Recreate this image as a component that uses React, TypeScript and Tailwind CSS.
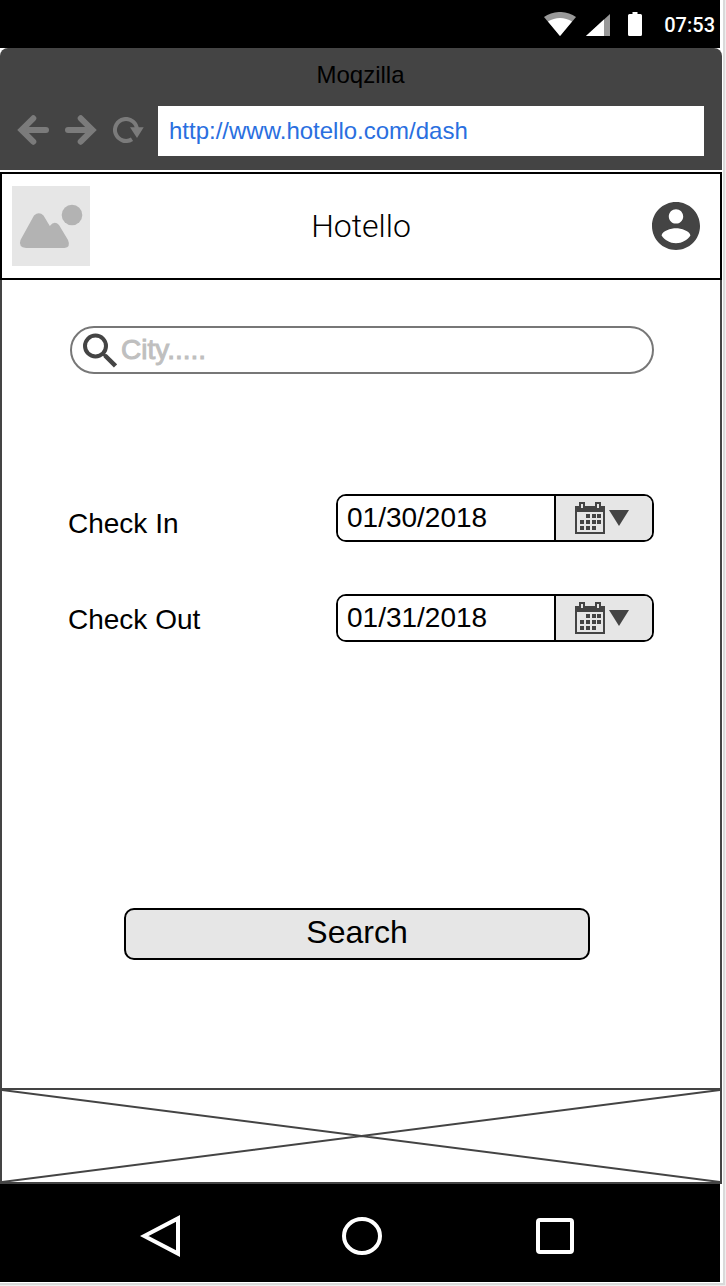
import { useState } from "react";

function StatusBar() {
  return (
    <div className="mr-0.5 flex h-12 items-center justify-end bg-black pr-[5px] text-white">
      <svg className="mr-2.5 h-6 w-8" viewBox="0 0 32 24" aria-hidden="true">
        <path d="M0 5C9-1.700 23-1.700 32 5L16 24Z" fill="#999" />
        <path d="M4 9.500C11 4.700 21 4.700 28 9.500L16 24Z" fill="#fff" />
      </svg>
      <svg className="mr-[18px] h-6 w-6" viewBox="0 0 24 24" aria-hidden="true">
        <path d="M0 24L24 2V24Z" fill="#999" />
        <path d="M0 24L18 7.500V24Z" fill="#fff" />
      </svg>
      <svg className="mr-[22px] h-6 w-3.5" viewBox="0 0 14 24" aria-hidden="true">
        <path d="M4.500 0H9.500V2H12.500Q14 2 14 3.500V22.500Q14 24 12.500 24H1.500Q0 24 0 22.500V3.500Q0 2 1.500 2H4.500Z" fill="#fff" />
      </svg>
      <time className="pt-0.5 font-['Roboto',sans-serif] text-xl font-medium">07:53</time>
    </div>
  );
}

function ArrowIcon({ className }: { className?: string }) {
  return (
    <svg className={className} viewBox="0 0 32 30" fill="none" stroke="#7b7b7b" strokeWidth="6" strokeLinecap="round" aria-hidden="true">
      <path d="M29 15H6" />
      <path d="M16.300 3.300L4.500 15L16.300 26.700" />
    </svg>
  );
}

function BrowserBar() {
  const [url, setUrl] = useState("http://www.hotello.com/dash");
  return (
    <div className="rounded-t-lg bg-[#444] pr-[18px] pb-3.5 pl-[17px]">
      <div className="pt-[9px] pb-[13px] text-center text-2xl leading-9">Moqzilla</div>
      <div className="flex items-center">
        <div className="flex items-center gap-4 pr-3.5 pb-0.5">
          <button type="button" aria-label="Back">
            <ArrowIcon className="block h-[30px] w-8" />
          </button>
          <button type="button" aria-label="Forward">
            <ArrowIcon className="block h-[30px] w-8 rotate-180" />
          </button>
          <button type="button" aria-label="Reload">
            <svg className="block h-[26px] w-[31px]" viewBox="0 0 31 26" aria-hidden="true">
              <path d="M19 22.200A11 11 0 1 1 24 13" fill="none" stroke="#7b7b7b" strokeWidth="4" />
              <path d="M17 10.300H30.700L24 21Z" fill="#7b7b7b" />
            </svg>
          </button>
        </div>
        <input
          type="text"
          aria-label="Address"
          value={url}
          onChange={(e) => setUrl(e.target.value)}
          className="h-[50px] min-w-0 flex-1 bg-white px-[11px] text-2xl text-[#2a6fdf] outline-none"
        />
      </div>
    </div>
  );
}

function AppHeader() {
  return (
    <header className="mt-0.5 flex items-center justify-between border-2 border-black bg-white py-3 pr-5 pl-2.5">
      <svg className="h-20 w-[78px] bg-[#e6e6e6]" viewBox="0 0 78 80" fill="#b3b3b3" role="img" aria-label="Logo">
        <path d="M22 29.500Q27 25 31.500 29.500L37.800 40Q42.500 34 47 39L56 54Q59 61 52.500 62H14Q6 61 8.500 54Z" />
        <circle cx="60" cy="29" r="10.300" />
      </svg>
      <h1 className="pr-5 font-['Roboto',sans-serif] text-[32px] leading-10 font-light">
        Hotello
      </h1>
      <button type="button" aria-label="Account">
        <svg className="block h-12 w-12" viewBox="2 2 20 20" fill="#444" aria-hidden="true">
          <path d="M12 2C6.480 2 2 6.480 2 12s4.480 10 10 10 10-4.480 10-10S17.520 2 12 2zm0 3c1.660 0 3 1.340 3 3s-1.340 3-3 3-3-1.340-3-3 1.340-3 3-3zm0 14.200c-2.500 0-4.710-1.280-6-3.220.03-1.990 4-3.080 6-3.080 1.990 0 5.970 1.090 6 3.080-1.290 1.940-3.500 3.220-6 3.220z" />
        </svg>
      </button>
    </header>
  );
}

function CalendarIcon() {
  return (
    <svg className="h-8 w-[30px]" viewBox="0 0 30 32" fill="#444" shapeRendering="crispEdges" aria-hidden="true">
      <path fillRule="evenodd" d="M0 4H4V0H10V4H20V0H26V4H30V32H0ZM6 2V6H8V2ZM22 2V6H24V2ZM2 10V30H28V10Z" />
      <path d="M11 12h4v4h-4zM17 12h4v4h-4zM22 12h4v4h-4zM5 18h4v4h-4zM11 18h4v4h-4zM17 18h4v4h-4zM22 18h4v4h-4zM5 24h4v4h-4zM11 24h4v4h-4zM17 24h4v4h-4z" />
    </svg>
  );
}

function DateField({ id, label, initial }: { id: string; label: string; initial: string }) {
  const [value, setValue] = useState(initial);
  return (
    <div className="flex h-12 overflow-hidden rounded-[10px] border-2 border-black bg-white">
      <input
        id={id}
        type="text"
        value={value}
        onChange={(e) => setValue(e.target.value)}
        className="min-w-0 flex-1 bg-white pl-[9px] text-[28px] outline-none"
      />
      <button
        type="button"
        aria-label={`Choose ${label} date`}
        className="flex w-[98px] items-center gap-1 border-l-2 border-black bg-[#e6e6e6] pl-[19px]"
      >
        <CalendarIcon />
        <svg className="h-4 w-5" viewBox="0 0 20 16" aria-hidden="true">
          <path d="M0 0H20L10 16Z" fill="#444" />
        </svg>
      </button>
    </div>
  );
}

function SearchForm() {
  const [city, setCity] = useState("");
  return (
    <form
      className="flex flex-1 flex-col border-x-2 border-[#444] bg-white px-[66px] pt-[46px] pb-32"
      onSubmit={(e) => e.preventDefault()}
    >
      <div className="ml-0.5 flex h-12 items-center rounded-full border-2 border-[#777] pl-2.5">
        <svg className="h-[35px] w-[35px]" viewBox="0 0 35 35" fill="none" stroke="#444" aria-hidden="true">
          <circle cx="13.500" cy="13" r="10.500" strokeWidth="4" />
          <path d="M20.500 20.500L23.500 23" strokeWidth="3" />
          <path d="M23 22.500L33.500 33" strokeWidth="4.500" />
        </svg>
        <input
          type="text"
          aria-label="City"
          placeholder="City....."
          value={city}
          onChange={(e) => setCity(e.target.value)}
          className="mr-6 ml-1 min-w-0 flex-1 bg-transparent text-[28px] outline-none placeholder:text-[#bfbfbf] placeholder:[-webkit-text-stroke:1px_#bfbfbf]"
        />
      </div>
      <div className="mt-[120px] mb-10 flex justify-between gap-6">
        <div className="flex flex-col gap-16 pt-3.5 text-[28px] leading-8">
          <label htmlFor="check-in">Check In</label>
          <label htmlFor="check-out">Check Out</label>
        </div>
        <div className="flex w-[318px] flex-col gap-[52px]">
          <DateField id="check-in" label="Check In" initial="01/30/2018" />
          <DateField id="check-out" label="Check Out" initial="01/31/2018" />
        </div>
      </div>
      <button
        type="submit"
        className="mt-auto mr-16 ml-14 h-[52px] rounded-[10px] border-2 border-black bg-[#e6e6e6] pb-1 text-[32px] leading-9"
      >
        Search
      </button>
    </form>
  );
}

function BannerPlaceholder() {
  return (
    <div className="h-24 border-2 border-[#444] bg-white">
      <svg className="block h-full w-full" viewBox="0 0 718 92" preserveAspectRatio="none" stroke="#444" strokeWidth="2" aria-hidden="true">
        <path d="M0 0L718 92M0 92L718 0" vectorEffect="non-scaling-stroke" />
      </svg>
    </div>
  );
}

function NavigationBar() {
  return (
    <nav className="mr-0.5 flex h-[98px] items-center justify-between bg-black pt-[5px] pr-[146px] pl-[140px]">
      <button type="button" aria-label="Go back" className="w-12">
        <svg className="block h-[42px] w-10" viewBox="0 0 40 42" fill="none" stroke="#fff" strokeWidth="4" aria-hidden="true">
          <path d="M4.300 21L38 3.400V38.600Z" />
        </svg>
      </button>
      <button type="button" aria-label="Home">
        <svg className="block h-[38px] w-10" viewBox="0 0 40 38" fill="none" stroke="#fff" strokeWidth="4" aria-hidden="true">
          <ellipse cx="20" cy="19" rx="18" ry="17" />
        </svg>
      </button>
      <button type="button" aria-label="Recent apps">
        <svg className="block h-9 w-[38px]" viewBox="0 0 38 36" fill="none" stroke="#fff" strokeWidth="4" aria-hidden="true">
          <rect x="2" y="2" width="34" height="32" rx="2" />
        </svg>
      </button>
    </nav>
  );
}

export default function App() {
  return (
    <div className="flex min-h-screen flex-col border-r border-b border-[#eee] font-['Liberation_Sans',Arial,sans-serif] text-black">
      <div className="flex flex-1 flex-col border-r-2 border-b-2 border-[#d9d9d9] bg-white pr-px pb-px">
        <StatusBar />
        <BrowserBar />
        <AppHeader />
        <SearchForm />
        <BannerPlaceholder />
        <NavigationBar />
      </div>
    </div>
  );
}
